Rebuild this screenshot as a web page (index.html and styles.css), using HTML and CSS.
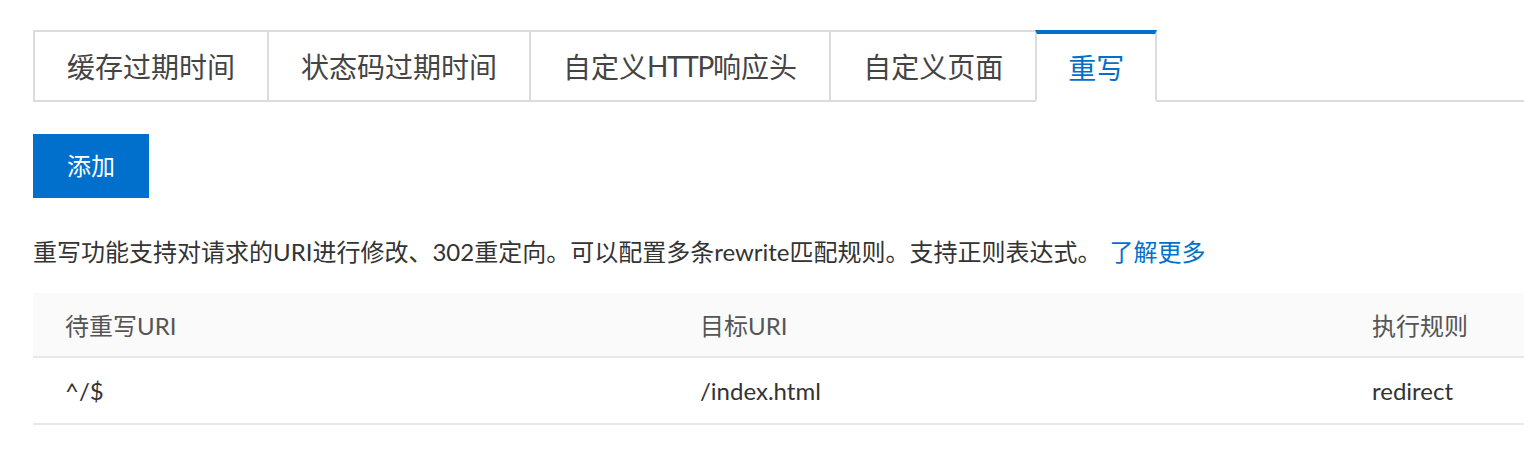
FILE: index.html
```html
<!DOCTYPE html>
<html lang="zh-CN">
<head>
<meta charset="utf-8">
<title>重写</title>
<link rel="stylesheet" href="styles.css">
</head>
<body>
<div class="page">
  <div class="tabs">
    <div class="tab">缓存过期时间</div>
    <div class="tab">状态码过期时间</div>
    <div class="tab">自定义<span class="latin">HTTP</span>响应头</div>
    <div class="tab">自定义页面</div>
    <div class="tab active">重写</div>
    <div class="tab-fill"></div>
  </div>
  <button class="btn-primary" type="button">添加</button>
  <p class="desc">重写功能支持对请求的URI进行修改、302重定向。可以配置多条rewrite匹配规则。支持正则表达式。<a class="link" href="#">了解更多</a></p>
  <div class="table">
    <div class="row head">
      <div class="cell">待重写URI</div>
      <div class="cell">目标URI</div>
      <div class="cell">执行规则</div>
    </div>
    <div class="row">
      <div class="cell">^/$</div>
      <div class="cell">/index.html</div>
      <div class="cell">redirect</div>
    </div>
  </div>
</div>
</body>
</html>
```

FILE: styles.css
```css
html, body {
  margin: 0;
  padding: 0;
  background: #fff;
}
body {
  font-family: "Lato", "Noto Sans CJK SC", sans-serif;
  color: #333;
  overflow: hidden;
}
.page {
  padding: 30px 0 0 33px;
}
.tabs {
  display: flex;
  height: 72px;
}
.tab {
  box-sizing: border-box;
  height: 72px;
  display: flex;
  align-items: center;
  padding: 0 32px;
  font-size: 28px;
  color: #444;
  border-top: 2px solid #dcdcdc;
  border-left: 2px solid #dcdcdc;
  border-bottom: 2px solid #dcdcdc;
  white-space: nowrap;
}
.latin {
  letter-spacing: -1.3px;
}
.tab.active {
  color: #0070cc;
  border-top: 4px solid #0070cc;
  border-right: 2px solid #dcdcdc;
  border-bottom-color: #fff;
  padding: 0 31px 0 31px;
}
.tab-fill {
  flex: 1;
  border-bottom: 2px solid #dcdcdc;
}
.btn-primary {
  display: block;
  margin-top: 32px;
  width: 116px;
  height: 64px;
  border: 0;
  padding: 0 0 4px 0;
  background: #0070cc;
  color: #fff;
  font-family: inherit;
  font-size: 24px;
  cursor: pointer;
}
.desc {
  margin: 36px 0 0 0;
  font-size: 24px;
  line-height: 36px;
  color: #333;
  white-space: nowrap;
}
.link {
  color: #0070cc;
  text-decoration: none;
  margin-left: 8px;
}
.table {
  margin-top: 23px;
}
.row {
  display: grid;
  grid-template-columns: 635px 672px 1fr;
  height: 65px;
  border-bottom: 2px solid #e8e8e8;
  align-items: center;
  font-size: 24px;
}
.row.head {
  height: 63px;
  background: #fafafa;
  color: #555;
}
.cell {
  padding-left: 32px;
  white-space: nowrap;
}
```
